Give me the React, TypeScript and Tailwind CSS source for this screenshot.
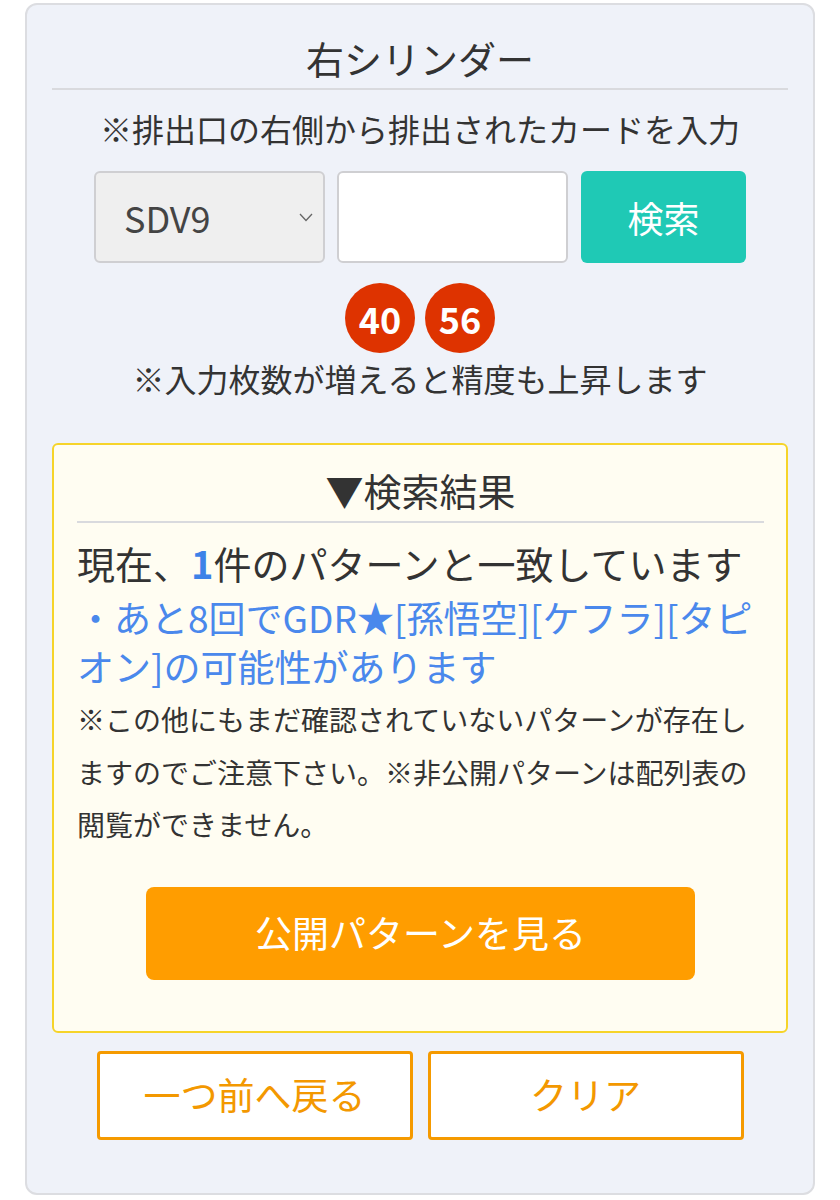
import React from "react";

const font = { fontFamily: '"Noto Sans CJK JP", Roboto, sans-serif' };

function Chevron() {
  return (
    <svg width="14" height="9" viewBox="0 0 14 9" className="shrink-0">
      <path d="M1 1 L7 7.5 L13 1" fill="none" stroke="#666" strokeWidth="1.3" />
    </svg>
  );
}

export default function App() {
  return (
    <div className="bg-white min-h-[1200px] px-[25px] pt-[3px]" style={font}>
      <div className="w-[790px] h-[1192px] rounded-[12px] border-2 border-[#dcdde1] bg-[#eff2f9] px-[25px] text-[#333]">
        <h2 className="mt-[28px] pb-[5px] border-b-2 border-[#d9dade] text-center text-[38px] leading-[50px] font-normal">
          右シリンダー
        </h2>
        <p className="mt-[17px] text-center text-[32px] leading-[42px]">※排出口の右側から排出されたカードを入力</p>

        <div className="mt-[22px] flex justify-center gap-[12px]">
          <div className="w-[231px] h-[92px] rounded-[6px] border-2 border-[#cfcfd2] bg-[#efefef] flex items-center justify-between pl-[28px] pr-[10px]">
            <span className="text-[36px] text-[#444]">SDV9</span>
            <Chevron />
          </div>
          <div className="w-[231px] h-[92px] rounded-[6px] border-2 border-[#cfcfd2] bg-white" />
          <button className="ml-px w-[165px] h-[92px] rounded-[6px] bg-[#1fc9b5] text-white text-[36px]">検索</button>
        </div>

        <div className="mt-[20px] flex justify-center gap-[10px]">
          <div className="w-[70px] h-[70px] rounded-full bg-[#de3300] text-white text-[36px] font-bold flex items-center justify-center">40</div>
          <div className="w-[70px] h-[70px] rounded-full bg-[#de3300] text-white text-[36px] font-bold flex items-center justify-center">56</div>
        </div>
        <p className="mt-[4px] text-center text-[32px] leading-[42px]">※入力枚数が増えると精度も上昇します</p>

        <div className="mt-[44px] rounded-[6px] border-2 border-[#f6d42a] bg-[#fffdf2] pl-[23px] pr-[22px] pt-[20px] pb-[51px]">
          <h3 className="pb-[6px] border-b-2 border-[#d9dade] text-center text-[38px] leading-[50px] font-normal">▼検索結果</h3>
          <p className="mt-[15px] text-[38px] leading-[50px]">
            現在、<span className="font-bold text-[#3d82e8]">1</span>件のパターンと一致しています
          </p>
          <p className="mt-[5px] text-[37px] leading-[49px] text-[#4a88ec]">
            ・あと8回でGDR★[孫悟空][ケフラ][タピオン]の可能性があります
          </p>
          <p className="mt-[2px] text-[28px] leading-[52.5px]">
            ※この他にもまだ確認されていないパターンが存在しますのでご注意下さい。※非公開パターンは配列表の閲覧ができません。
          </p>
          <div className="mt-[36px] flex justify-center">
            <button className="w-[549px] h-[93px] rounded-[8px] bg-[#ff9d00] text-white text-[37px]">公開パターンを見る</button>
          </div>
        </div>

        <div className="mt-[18px] flex justify-center gap-[15px]">
          <button className="w-[316px] h-[89px] rounded-[4px] border-[3px] border-[#f59a00] bg-white text-[#f39800] text-[37px]">一つ前へ戻る</button>
          <button className="w-[316px] h-[89px] rounded-[4px] border-[3px] border-[#f59a00] bg-white text-[#f39800] text-[37px]">クリア</button>
        </div>
      </div>
    </div>
  );
}
